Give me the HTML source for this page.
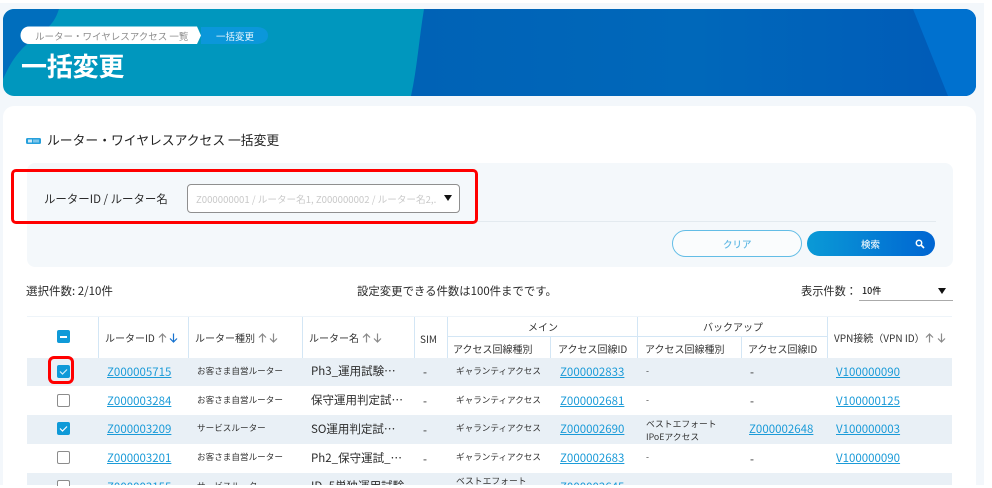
<!DOCTYPE html>
<html lang="ja"><head><meta charset="utf-8">
<style>
html,body{margin:0;padding:0;background:#fff}
body{width:992px;height:488px;position:relative;overflow:hidden;font-family:"Liberation Sans","Noto Sans CJK JP",sans-serif;color:#2b2b2b}
#bg{position:absolute;left:0;top:3px;width:984px;height:482px;background:#f3f7fb;overflow:hidden}
.a{position:absolute;white-space:nowrap}
.t{position:absolute;white-space:nowrap;line-height:16px;font-family:"Noto Sans CJK JP",sans-serif}
.l{color:#1b9bd8;text-decoration:underline;font-size:11.5px;font-family:"Noto Sans CJK JP",sans-serif}
.s{font-size:8.6px;color:#333}
.h{font-size:10px;color:#333}
.n{font-size:11.5px;color:#2b2b2b}
.v{position:absolute;width:1px;background:#d3e6f5}
.r{position:absolute;left:27px;width:925px;background:#e9f0f6}
.c{position:absolute;left:57px;width:11px;height:11px;border:1px solid #8c8c8c;border-radius:2px;background:#fff}
.cb{position:absolute;left:57px;width:13px;height:13px;border-radius:2px;background:#0f9ad8}
.u,.d{position:absolute;top:333px}
.u path,.d path{fill:none;stroke:#8a8a8a;stroke-width:1.200}
.d.b path{stroke:#1672cf}
</style></head><body>
<div id="bg"></div>

<svg class="a" style="left:3px;top:9px" width="973" height="87" viewBox="0 0 973 87">
<defs>
<clipPath id="hc"><rect width="973" height="87" rx="11"/></clipPath>
<linearGradient id="hg" x1="0" x2="1" y1="0" y2="0"><stop offset="0" stop-color="#0062b6"/><stop offset=".5" stop-color="#0068ba"/><stop offset="1" stop-color="#005ab8"/></linearGradient>
</defs>
<g clip-path="url(#hc)">
<rect width="973" height="87" fill="#0097be"/>
<path d="M0 0H56C52 12 48 18 28 32C12 44 6 58 0 70Z" fill="#006ebd"/>
<path d="M421 0H973V87H408C414 60 416 30 421 0Z" fill="url(#hg)"/>
<path d="M910 0H973V87H945Z" fill="#0071cf"/>
</g>
</svg>

<svg class="a" style="left:20px;top:26px" width="250" height="19" viewBox="0 0 250 19">
<path d="M181 1H236C243 1 248 4 248 9.5C248 15 243 18 236 18H181Z" fill="#0b97da"/>
<path d="M9 0.5H177L181 9.5L177 18H9C4 18 0.500 14 0.500 9.500C0.500 4.500 4 0.500 9 0.500Z" fill="#fff"/>
</svg>
<div class="t" style="left:35px;top:28px;font-size:9.5px;color:#8d8d8d;line-height:16px">ルーター・ワイヤレスアクセス 一覧</div>
<div class="t" style="left:216px;top:28px;font-size:9.5px;color:#e9f6fd;line-height:16px">一括変更</div>
<div class="t" style="left:21px;top:50px;font-size:26px;font-weight:700;color:#fff;line-height:32px;letter-spacing:-.2px">一括変更</div>

<div class="a" style="left:3px;top:106px;width:973px;height:382px;background:#fff;border-radius:11px 11px 0 0"></div>
<div class="a" style="left:0;top:485px;width:992px;height:3px;background:#fff"></div>

<svg class="a" style="left:26px;top:137px" width="16" height="8" viewBox="0 0 16 8"><rect y="1" width="15" height="6" rx="1.500" fill="#26a0dc"/><rect x="2" y="2.500" width="4" height="3" fill="#cfe9f7"/><rect x="7" y="2.500" width="6" height="3" fill="#7cc5ea"/></svg>
<div class="t" style="left:47px;top:132px;font-size:12.8px;color:#222">ルーター・ワイヤレスアクセス 一括変更</div>

<div class="a" style="left:27px;top:163px;width:926px;height:104px;background:#f4f8fb;border-radius:8px"></div>
<div class="a" style="left:43px;top:221px;width:893px;height:1px;background:#e3eaef"></div>
<div class="t" style="left:44px;top:191px;font-size:11.45px;color:#2b2b2b">ルーターID / ルーター名</div>
<div class="a" style="left:187px;top:184px;width:271px;height:27px;border:1px solid #8f8f8f;border-radius:4px;background:#fff"></div>
<div class="t" style="left:196px;top:190.500px;font-size:9.600px;color:#c9c9c9;width:240px;overflow:hidden">Z000000001 / ルーター名1, Z000000002 / ルーター名2,.</div>
<svg class="a" style="left:444px;top:195px" width="9" height="7" viewBox="0 0 9 7"><path d="M0 0H8L4 6Z" fill="#111"/></svg>

<div class="a" style="left:672px;top:230px;width:128px;height:25px;border:1px solid #63bde6;border-radius:14px;background:#fafcfd"></div>
<div class="t" style="left:723px;top:236px;font-size:9.500px;font-weight:500;color:#63b9e4">クリア</div>
<div class="a" style="left:807px;top:231px;width:128px;height:25px;border-radius:13px;background:linear-gradient(90deg,#0a9ad6,#0065d2)"></div>
<div class="t" style="left:861px;top:236px;font-size:9.500px;font-weight:500;color:#e8f5fc">検索</div>
<svg class="a" style="left:915px;top:239px" width="10" height="10" viewBox="0 0 10 10"><circle cx="4" cy="4" r="2.700" fill="none" stroke="#fff" stroke-width="1.500"/><path d="M6 6L9 9" stroke="#fff" stroke-width="1.700"/></svg>

<div class="t" style="left:26px;top:283px;font-size:11.5px;color:#2b2b2b">選択件数: 2/10件</div>
<div class="t" style="left:357px;top:283px;font-size:11.4px;color:#2b2b2b">設定変更できる件数は100件までです。</div>
<div class="t" style="left:801px;top:283px;font-size:11.2px;color:#2b2b2b">表示件数：</div>
<div class="t" style="left:862px;top:283px;font-size:9px;font-weight:500;color:#222">10件</div>
<svg class="a" style="left:938px;top:288px" width="9" height="7" viewBox="0 0 9 7"><path d="M0 0H8L4 6Z" fill="#111"/></svg>
<div class="a" style="left:859px;top:300px;width:94px;height:1px;background:#aaa"></div>

<!-- table -->
<div class="a" style="left:27px;top:316px;width:925px;height:1px;background:#eef4f9"></div>
<div class="a" style="left:447px;top:336px;width:380px;height:1px;background:#d3e6f5"></div>
<div class="v" style="left:98px;top:317px;height:41px"></div>
<div class="v" style="left:188px;top:317px;height:41px"></div>
<div class="v" style="left:302px;top:317px;height:41px"></div>
<div class="v" style="left:414px;top:317px;height:41px"></div>
<div class="v" style="left:447px;top:317px;height:41px"></div>
<div class="v" style="left:550px;top:337px;height:21px"></div>
<div class="v" style="left:637px;top:317px;height:41px"></div>
<div class="v" style="left:741px;top:337px;height:21px"></div>
<div class="v" style="left:827px;top:317px;height:41px"></div>

<div class="r" style="top:358px;height:28px"></div>
<div class="r" style="top:415px;height:29px"></div>
<div class="r" style="top:473px;height:12px"></div>

<div class="t h" style="left:105px;top:330px">ルーターID</div>
<div class="t h" style="left:195px;top:330px">ルーター種別</div>
<div class="t h" style="left:309px;top:330px">ルーター名</div>
<div class="t h" style="left:420px;top:331px">SIM</div>
<div class="t h" style="left:528px;top:319px">メイン</div>
<div class="t h" style="left:703px;top:319px">バックアップ</div>
<div class="t h" style="left:453px;top:341px">アクセス回線種別</div>
<div class="t h" style="left:558px;top:341px">アクセス回線ID</div>
<div class="t h" style="left:645px;top:341px">アクセス回線種別</div>
<div class="t h" style="left:748px;top:341px">アクセス回線ID</div>
<div class="t h" style="left:834px;top:330px">VPN接続（VPN ID）</div>

<svg class="u" style="left:158px" width="9" height="10"><path d="M4.500 9.500V1M1 4.500L4.500 1L8 4.500"/></svg>
<svg class="d b" style="left:169px" width="9" height="10"><path d="M4.500 0.500V9M1 5.500L4.500 9L8 5.500"/></svg>
<svg class="u" style="left:258px" width="9" height="10"><path d="M4.500 9.500V1M1 4.500L4.500 1L8 4.500"/></svg>
<svg class="d" style="left:269px" width="9" height="10"><path d="M4.500 0.500V9M1 5.500L4.500 9L8 5.500"/></svg>
<svg class="u" style="left:362px" width="9" height="10"><path d="M4.500 9.500V1M1 4.500L4.500 1L8 4.500"/></svg>
<svg class="d" style="left:373px" width="9" height="10"><path d="M4.500 0.500V9M1 5.500L4.500 9L8 5.500"/></svg>
<svg class="u" style="left:925px" width="9" height="10"><path d="M4.500 9.500V1M1 4.500L4.500 1L8 4.500"/></svg>
<svg class="d" style="left:937px" width="9" height="10"><path d="M4.500 0.500V9M1 5.500L4.500 9L8 5.500"/></svg>

<div class="cb" style="top:330px"><div class="a" style="left:3px;top:6px;width:7px;height:1.500px;background:#fff"></div></div>

<div class="cb" style="top:365px"><svg class="a" style="left:0;top:0" width="13" height="13"><path d="M3 6.500L5.500 9L10 4.500" fill="none" stroke="#d5eefa" stroke-width="1.200"/></svg></div>
<div class="c" style="top:394px"></div>
<div class="cb" style="top:422px"><svg class="a" style="left:0;top:0" width="13" height="13"><path d="M3 6.500L5.500 9L10 4.500" fill="none" stroke="#fff" stroke-width="1.200"/></svg></div>
<div class="c" style="top:451px"></div>
<div class="c" style="top:480px;height:5px;border-bottom:0;border-radius:2px 2px 0 0"></div>

<!-- row 1 -->
<div class="t l" style="left:107px;top:364px">Z000005715</div>
<div class="t s" style="left:197px;top:363px">お客さま自営ルーター</div>
<div class="t n" style="left:311px;top:363px">Ph3_運用試験…</div>
<div class="t n" style="left:423px;top:364px">-</div>
<div class="t s" style="left:456px;top:363px">ギャランティアクセス</div>
<div class="t l" style="left:560px;top:364px">Z000002833</div>
<div class="t s" style="left:646px;top:363px">-</div>
<div class="t n" style="left:750px;top:364px">-</div>
<div class="t l" style="left:836px;top:364px">V100000090</div>
<!-- row 2 -->
<div class="t l" style="left:107px;top:393px">Z000003284</div>
<div class="t s" style="left:197px;top:392px">お客さま自営ルーター</div>
<div class="t n" style="left:311px;top:392px">保守運用判定試…</div>
<div class="t n" style="left:423px;top:393px">-</div>
<div class="t s" style="left:456px;top:392px">ギャランティアクセス</div>
<div class="t l" style="left:560px;top:393px">Z000002681</div>
<div class="t s" style="left:646px;top:392px">-</div>
<div class="t n" style="left:750px;top:393px">-</div>
<div class="t l" style="left:836px;top:393px">V100000125</div>
<!-- row 3 -->
<div class="t l" style="left:107px;top:421px">Z000003209</div>
<div class="t s" style="left:197px;top:420px">サービスルーター</div>
<div class="t n" style="left:311px;top:421px">SO運用判定試…</div>
<div class="t n" style="left:423px;top:422px">-</div>
<div class="t s" style="left:456px;top:420px">ギャランティアクセス</div>
<div class="t l" style="left:560px;top:421px">Z000002690</div>
<div class="t s" style="left:646px;top:417px;line-height:13px;white-space:pre;font-size:8.800px">ベストエフォート
IPoEアクセス</div>
<div class="t l" style="left:749px;top:421px">Z000002648</div>
<div class="t l" style="left:836px;top:421px">V100000003</div>
<!-- row 4 -->
<div class="t l" style="left:107px;top:450px">Z000003201</div>
<div class="t s" style="left:197px;top:449px">お客さま自営ルーター</div>
<div class="t n" style="left:311px;top:450px">Ph2_保守運試_…</div>
<div class="t n" style="left:423px;top:451px">-</div>
<div class="t s" style="left:456px;top:449px">ギャランティアクセス</div>
<div class="t l" style="left:560px;top:450px">Z000002683</div>
<div class="t s" style="left:646px;top:449px">-</div>
<div class="t n" style="left:750px;top:451px">-</div>
<div class="t l" style="left:836px;top:450px">V100000090</div>
<!-- row 5 clipped -->
<div class="a" style="left:27px;top:473px;width:925px;height:12px;overflow:hidden">
<div class="t l" style="left:80px;top:6px">Z000003155</div>
<div class="t s" style="left:170px;top:5px">サービスルーター</div>
<div class="t n" style="left:284px;top:5px">ID_5単独運用試験…</div>
<div class="t s" style="left:429px;top:0;font-size:8.800px">ベストエフォート</div>
<div class="t l" style="left:533px;top:6px">Z000002645</div>
</div>

<!-- red annotations -->
<div class="a" style="left:11px;top:169px;width:461px;height:49px;border:3.500px solid #f00;border-radius:5px"></div>
<div class="a" style="left:48px;top:356px;width:20px;height:22px;border:3.500px solid #f00;border-radius:6px"></div>
</body></html>
